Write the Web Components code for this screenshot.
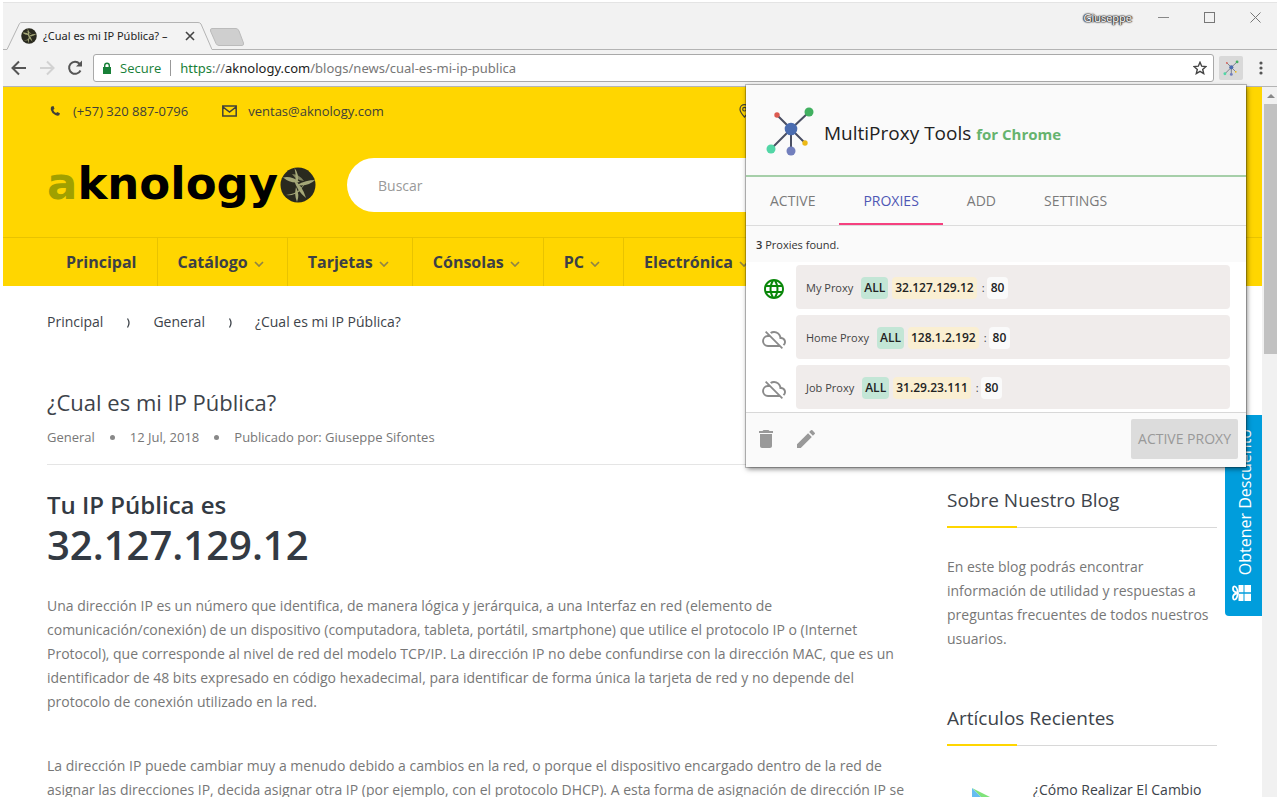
<!DOCTYPE html>
<html lang="es">
<head>
<meta charset="utf-8">
<title>¿Cual es mi IP Pública? – aknology</title>
<style>
html, body { margin: 0; height: 100%; background: #fff; }
body { font-family: "Open Sans", "Noto Sans", sans-serif; font-size: 14px; color: #777; overflow: hidden; }
</style>
</head>
<body>
<browser-window>
  <tab-strip slot="chrome" user="Giuseppe">¿Cual es mi IP Pública? –</tab-strip>
  <tool-bar slot="chrome"></tool-bar>
  <shop-header></shop-header>
  <blog-page></blog-page>
  <discount-tab slot="overlay">Obtener Descuento</discount-tab>
  <proxy-popup slot="popup">
    <proxy-row state="on" protocol="ALL" host="32.127.129.12" port="80">My Proxy</proxy-row>
    <proxy-row protocol="ALL" host="128.1.2.192" port="80">Home Proxy</proxy-row>
    <proxy-row protocol="ALL" host="31.29.23.111" port="80">Job Proxy</proxy-row>
  </proxy-popup>
</browser-window>

<script>
const RESET = `
  :host, *, *::before, *::after { box-sizing: border-box; }
  button { border: 0; padding: 0; margin: 0; background: none; font: inherit; color: inherit; display: grid; place-items: center; cursor: pointer; }
  a { color: inherit; text-decoration: none; }
  svg { display: block; }
  h1, h2, h3, p, ul, ol { margin: 0; padding: 0; font-weight: 400; list-style: none; }
`;

function define(name, render) {
  customElements.define(name, class extends HTMLElement {
    constructor() {
      super();
      this.attachShadow({ mode: 'open' });
    }
    connectedCallback() {
      const t = document.createElement('template');
      const { css, html } = render(this);
      t.innerHTML = `<style>${RESET}${css}</style>${html}`;
      this.shadowRoot.replaceChildren(t.content.cloneNode(true));
    }
  });
}

const NODES = `
  <path d="M11 9 25 23 43 6M25 23 5 43M25 23V45M25 23 39 37" fill="none" stroke="#4a4f63" stroke-width="2"/>
  <circle cx="11" cy="9" r="2.7" fill="#dc5a50"/><circle cx="43" cy="6" r="4.5" fill="#41b060"/>
  <circle cx="25" cy="23" r="6.3" fill="#4a6cb0"/><circle cx="5" cy="43" r="4.5" fill="#52d6a6"/>
  <circle cx="25" cy="45" r="4.5" fill="#727fbd"/><circle cx="39" cy="37" r="2.7" fill="#edb916"/>`;

const GLOBE = `
  <circle cx="18" cy="18" r="17.5" fill="#2a2a1f"/>
  <g fill="#a5a878">
    <path d="M14.500 1q5 6 3 15-1.500-1-2-4 .5-5-1-11Z"/><path d="M3 10.500q8-2 17 4.500-9 2-17-4.500Z"/>
    <path d="M14 13q8 5 12 18-9-7-12-18Z"/><path d="M35 13q-9 0-18 5 11 2 18-5Z"/>
    <path d="M30 13q-6 4-10 11-6 5-14 4 9-1 13-5 5-6 11-10Z"/>
    <path d="M16 20q-2 8 1 15 3-7-1-15Z"/><path d="M12 7q7 0 12 7-8-1-12-7Z" opacity=".7"/>
  </g>`;

define('browser-window', () => ({
  css: `
    :host { display: block; height: 100vh; padding: 2px 3px 3px; }
    .frame { height: 100%; display: flex; flex-direction: column; position: relative; background: #f2f2f2; border-top: 1px solid #e4e4e4; }
    .view { flex: 1; min-height: 0; display: flex; background: #fff; }
    .page { flex: 1; min-width: 0; overflow: hidden; position: relative; }
    .bar { width: 15px; background: #f1f1f1; padding-left: 2px; display: flex; flex-direction: column; }
    .up { height: 17px; display: grid; place-items: center; }
    .thumb { height: 250px; background: #c1c1c1; }
    .popup { position: absolute; top: 82px; right: 31px; width: 500px; }
  `,
  html: `<div class="frame"><slot name="chrome"></slot>
    <div class="view">
      <div class="page"><slot></slot><slot name="overlay"></slot></div>
      <div class="bar"><div class="up"><svg width="8" height="4"><path d="M0 4 4 0 8 4Z" fill="#888"/></svg></div><div class="thumb"></div></div>
    </div>
    <div class="popup"><slot name="popup"></slot></div></div>`
}));

define('tab-strip', el => ({
  css: `
    :host { display: flex; height: 47px; font-size: 12px; color: #222; align-items: flex-end; }
    .lead { width: 4px; border-bottom: 1px solid #b4b4b4; }
    .tab { position: relative; width: 205px; height: 28px; display: flex; align-items: center; padding: 0 14px; gap: 6px; }
    .shape { position: absolute; inset: 0; }
    .tab > * { position: relative; }
    .tab > .shape { position: absolute; }
    .label { flex: 1; white-space: nowrap; overflow: hidden; font-family: "Noto Sans", sans-serif; font-size: 11px; line-height: 18px; }
    .rest { flex: 1; align-self: stretch; display: flex; justify-content: space-between; border-bottom: 1px solid #b4b4b4; }
    .new { align-self: flex-end; margin: 0 0 3px -3px; }
    .sys { display: flex; align-items: center; height: 28px; padding-right: 16px; gap: 35px; color: #777; }
    .user { color: #fff; font-size: 11px; text-shadow: 0 0 1px #333, 0 0 2px #333, 0 0 2px #333, 1px 0 1px #555, -1px 0 1px #555; margin-right: -9px; }
  `,
  html: `<div class="lead"></div>
    <div class="tab">
      <svg class="shape" width="205" height="28"><path d="M0 27.500 12.500 1.500Q13 .5 15 .5H191Q193 .5 194 2L205 27.500" fill="#f3f3f3" stroke="#b4b4b4"/></svg>
      <svg width="16" height="16" viewBox="0 0 36 36">${GLOBE}</svg>
      <span class="label"><slot></slot></span>
      <button aria-label="Cerrar pestaña"><svg width="16" height="10"><path d="m4 1 8 8m0-8L4 9" stroke="#444" stroke-width="1.600"/></svg></button>
    </div>
    <div class="rest">
      <button class="new" aria-label="Nueva pestaña"><svg width="36" height="18"><path d="M3 .5H27Q29 .5 30 3L34.500 15Q35 17.500 33 17.500H10Q8 17.500 7 15.500L1.500 3Q1 .5 3 .5Z" fill="#cfcfcf" stroke="#bbb"/></svg></button>
      <div class="sys"><span class="user">${el.getAttribute('user')}</span>
        <button aria-label="Minimizar"><svg width="11" height="11"><path d="M0 5.500H11" stroke="#888"/></svg></button>
        <button aria-label="Maximizar"><svg width="11" height="11"><rect x=".5" y=".5" width="10" height="10" fill="none" stroke="#777"/></svg></button>
        <button aria-label="Cerrar"><svg width="11" height="11"><path d="m.5.5 10 10m0-10L.5 10.500" stroke="#777"/></svg></button>
      </div>
    </div>`
}));

define('tool-bar', () => ({
  css: `
    :host { display: flex; align-items: center; height: 37px; border-bottom: 1px solid #b4b4b4; padding: 0 14px 0 8px; font-size: 13px; color: #222; }
    .nav { display: flex; gap: 12px; margin-right: 10px; }
    .omni { flex: 1; height: 28px; display: flex; align-items: center; background: #fff; border: 1px solid #a9a9a9; border-radius: 3px; padding: 0 6px 0 8px; }
    .secure { color: #188038; margin-left: 8px; padding-right: 9px; border-right: 1px solid #999; line-height: 16px; }
    .url { flex: 1; margin-left: 9px; outline: 0; color: #777; white-space: nowrap; font-family: "Noto Sans", sans-serif; }
    .s { color: #188038; } .h { color: #222; }
    .ext { width: 24px; height: 24px; background: #d9d9d9; border-radius: 2px; margin: 0 16px 0 5px; }
  `,
  html: `<div class="nav">
      <button aria-label="Atrás"><svg width="16" height="16" fill="none" stroke="#555" stroke-width="2"><path d="M15 8H2M8 1.500 1.500 8 8 14.500"/></svg></button>
      <button aria-label="Adelante"><svg width="16" height="16" fill="none" stroke="#d2d2d2" stroke-width="2"><path d="M1 8H14M8 1.500 14.500 8 8 14.500"/></svg></button>
      <button aria-label="Recargar"><svg width="16" height="16" fill="none" stroke="#555" stroke-width="2"><path d="M13.500 10.500A6 6 0 1 1 12.500 3.700L14 5"/><path d="M15 .5V6.500H9Z" fill="#555" stroke="none"/></svg></button>
    </div>
    <div class="omni">
      <svg width="10" height="13"><path d="M1 5H9V12H1Z" fill="#188038"/><path d="M2.700 6V3.500a2.300 2.300 0 0 1 4.600 0V6" fill="none" stroke="#188038" stroke-width="1.400"/></svg>
      <span class="secure">Secure</span>
      <div class="url" role="textbox" aria-label="Dirección" contenteditable="true" spellcheck="false"><span class="s">https</span>://<span class="h">aknology.com</span>/blogs/news/cual-es-mi-ip-publica</div>
      <button aria-label="Favorito"><svg width="14" height="14" viewBox="0 0 14 14"><path d="m7 1.300 1.700 3.900 4.200.4-3.200 2.800 1 4.200L7 10.400l-3.700 2.200 1-4.200L1.100 5.600l4.200-.4Z" fill="none" stroke="#444" stroke-width="1.400"/></svg></button>
    </div>
    <button class="ext" aria-label="MultiProxy Tools"><svg width="16" height="16" viewBox="0 0 48 50">${NODES}</svg></button>
    <button aria-label="Menú"><svg width="4" height="14" fill="#555"><circle cx="2" cy="2" r="1.600"/><circle cx="2" cy="7" r="1.600"/><circle cx="2" cy="12" r="1.600"/></svg></button>`
}));

const CHEV = `<svg width="10" height="6" fill="none" stroke="#8f8445" stroke-width="1.700"><path d="m1 1 4 4 4-4"/></svg>`;
const CRUMB = `<svg width="6" height="10" fill="none" stroke="#3d434a" stroke-width="1.300"><path d="M2.500.5q3 4.500 0 9"/></svg>`;

define('shop-header', () => ({
  css: `
    :host { display: block; background: #ffd600; color: #40403a; }
    .top, .brand { padding: 0 45px 0 44px; display: flex; align-items: center; }
    .top { height: 48px; font-size: 13px; gap: 34px; }
    .top a { display: flex; align-items: center; gap: 11px; }
    .top .place { flex: 0 0 478px; margin-left: auto; }
    .brand { height: 102px; padding-bottom: 2px; gap: 31px; }
    .logo { display: flex; align-items: center; width: 269px; gap: 2px; color: #000; font: 700 45px/50px "DejaVu Sans", sans-serif; }
    .logo span { flex: 1; height: 52px; }
    .logo i { font-style: normal; color: #a0a000; }
    .search { flex: 1; }
    input { display: block; width: 100%; height: 54px; border: 0; border-radius: 27px; padding: 0 31px; background: #fff; font: 14px "Open Sans", sans-serif; color: #333; }
    input::placeholder { color: #999; opacity: 1; }
    nav { border-top: 1px solid #e8c300; padding: 0 43px; display: flex; height: 49px; font-size: 16px; font-weight: 700; }
    nav a { display: flex; align-items: center; gap: 6px; padding: 0 20px; border-right: 1px solid #e8c300; color: #3c3f46; }
    nav svg { margin-right: 3px; margin-top: 3px; }
  `,
  html: `<div class="top">
      <a href="#"><svg width="15" height="14" viewBox="0 0 15 14"><path d="M4.500 2.500 6.500 2l1 2.700-1.300 1.200q1 2.200 2.900 3.200l1.200-1.100 2.600 1.200-.6 2.100q-1.600 1-4-.3Q4.600 9.200 3.800 5.800 3.500 3.500 4.500 2.500Z" fill="#40403a"/></svg>(+57) 320 887-0796</a>
      <a href="#"><svg width="15" height="12" fill="none" stroke="#40403a" stroke-width="1.500"><path d="M.8 1H14.200V11H.8ZM1 2l6.500 5L14 2"/></svg>ventas@aknology.com</a>
      <a class="place" href="#" aria-label="Ubicación"><svg width="11" height="14" fill="none" stroke="#40403a" stroke-width="1.200"><path d="M5.500 13Q1 8 1 5.200a4.500 4.500 0 0 1 9 0Q10 8 5.500 13Z"/><circle cx="5.500" cy="5.200" r="1.800"/></svg></a>
    </div>
    <div class="brand">
      <a class="logo" href="#"><span><i>a</i>knology</span><svg width="36" height="36">${GLOBE}</svg></a>
      <div class="search"><input type="search" placeholder="Buscar" aria-label="Buscar"></div>
    </div>
    <nav><a href="#">Principal</a><a href="#">Catálogo ${CHEV}</a><a href="#">Tarjetas ${CHEV}</a><a href="#">Cónsolas ${CHEV}</a><a href="#">PC ${CHEV}</a><a href="#">Electrónica ${CHEV}</a></nav>`
}));

define('blog-page', () => ({
  css: `
    :host { display: block; padding: 0 45px 0 44px; line-height: 24px; }
    .crumbs { display: flex; gap: 22px; padding-top: 24px; color: #3d434a; }
    .crumbs svg { margin-top: 8px; }
    .cols { display: grid; grid-template-columns: minmax(0, 1fr) 270px; gap: 40px; }
    .head { padding-top: 53px; border-bottom: 1px solid #e5e5e5; padding-bottom: 17px; margin-bottom: 24px; }
    h1 { font-size: 22px; line-height: 30px; color: #3d434a; }
    .meta { display: flex; font-size: 13px; line-height: 20px; margin-top: 10px; gap: 15px; align-items: center; }
    .meta i { width: 5px; height: 5px; border-radius: 50%; background: #888; }
    h2 { font-size: 24px; line-height: 32px; color: #333a43; font-weight: 600; }
    .ip { font-size: 40px; line-height: 48px; color: #333a43; font-weight: 600; margin-bottom: 25px; }
    article p + p { margin-top: 40px; }
    aside { padding-top: 152px; }
    h3 { font-size: 19px; line-height: 28px; color: #3d434a; padding-bottom: 13px; border-bottom: 1px solid #d8d8d8; margin-bottom: 27px; position: relative; }
    h3::after { content: ""; position: absolute; left: 0; bottom: -1px; width: 70px; height: 2px; background: #ffd600; }
    aside p { margin-bottom: 53px; }
    .post { display: flex; gap: 16px; color: #3d434a; padding-top: 5px; }
    .thumb { width: 70px; padding: 10px 0 0 25px; }
  `,
  html: `<nav class="crumbs" aria-label="Ruta"><a href="#">Principal</a>${CRUMB}<a href="#">General</a>${CRUMB}<span>¿Cual es mi IP Pública?</span></nav>
    <div class="cols">
      <article>
        <div class="head"><h1>¿Cual es mi IP Pública?</h1>
          <div class="meta"><a href="#">General</a><i></i><span>12 Jul, 2018</span><i></i><span>Publicado por: Giuseppe Sifontes</span></div></div>
        <h2>Tu IP Pública es</h2>
        <div class="ip">32.127.129.12</div>
        <p>Una dirección IP es un número que identifica, de manera lógica y jerárquica, a una Interfaz en red (elemento de comunicación/conexión) de un dispositivo (computadora, tableta, portátil, smartphone) que utilice el protocolo IP o (Internet Protocol), que corresponde al nivel de red del modelo TCP/IP. La dirección IP no debe confundirse con la dirección MAC, que es un identificador de 48 bits expresado en código hexadecimal, para identificar de forma única la tarjeta de red y no depende del protocolo de conexión utilizado en la red.</p>
        <p>La dirección IP puede cambiar muy a menudo debido a cambios en la red, o porque el dispositivo encargado dentro de la red de asignar las direcciones IP, decida asignar otra IP (por ejemplo, con el protocolo DHCP). A esta forma de asignación de dirección IP se</p>
      </article>
      <aside>
        <h3>Sobre Nuestro Blog</h3>
        <p>En este blog podrás encontrar información de utilidad y respuestas a preguntas frecuentes de todos nuestros usuarios.</p>
        <h3>Artículos Recientes</h3>
        <a class="post" href="#"><span class="thumb"><svg width="36" height="36"><path d="M0 0 36 18 18 18Z" fill="#7fe37a"/><path d="M0 0V34L18 18Z" fill="#66bdf0"/></svg></span><span>¿Cómo Realizar El Cambio</span></a>
      </aside>
    </div>`
}));

define('discount-tab', () => ({
  css: `
    :host { position: absolute; right: 0; top: 328px; display: block; }
    button { display: flex; flex-direction: column; align-items: center; justify-content: flex-end; gap: 9px; width: 37px; height: 201px; padding: 0 0 14px; background: #009ddc; color: #fff; border-radius: 4px 0 0 4px; font-size: 16px; }
    span { writing-mode: vertical-rl; transform: rotate(180deg); line-height: 24px; margin-left: 3px; white-space: nowrap; }
    svg { margin-right: 4px; }
  `,
  html: `<button><span><slot></slot></span><svg width="19" height="18"><path d="M6.500 1H11.500V8.300H6.500ZM12.500 1H19V8.300H12.500ZM6.500 9.700H11.500V17H6.500ZM12.500 9.700H19V17H12.500Z" fill="#fff"/><path d="M6 9Q1 8 1 5T3 2.500 6 9Q1 10 1 13T3 15.500 6 9" fill="none" stroke="#fff" stroke-width="1.800"/></svg></button>`
}));

define('proxy-popup', () => ({
  css: `
    :host { display: block; background: #fafafa; color: #333; box-shadow: 0 0 0 1px rgba(0,0,0,.22), 1px 2px 5px rgba(0,0,0,.5); }
    header { height: 92px; display: flex; align-items: center; gap: 8px; padding: 1px 20px 0 20px; border-bottom: 2px solid #a6cfa9; }
    h2 { font-size: 19px; line-height: 28px; color: #222; padding-top: 6px; }
    h2 b { font-size: 15px; color: #66b36e; font-weight: 700; }
    .tabs { display: flex; height: 49px; border-bottom: 1px solid #dcdcdc; font-size: 14px; font-weight: 500; color: #7a7a7a; }
    .tabs button { padding: 0 24px 2px; }
    .tabs [aria-selected=true] { color: #4e57b5; box-shadow: inset 0 -2px #f5407f; }
    .count { height: 36px; line-height: 38px; font-size: 11px; padding-left: 10px; }
    .count b { font-weight: 600; }
    .list { display: grid; gap: 6px; padding: 3px 16px 3px 10px; background: #fff; }
    footer { height: 55px; border-top: 1px solid #d8d8d8; padding: 0 8px 2px 8px; display: flex; align-items: center; gap: 16px; }
    footer .go { margin-left: auto; width: 107px; height: 40px; padding-bottom: 2px; background: #dcdcdc; color: #999; border-radius: 2px; font-size: 14px; font-weight: 500; white-space: nowrap; }
  `,
  html: `<header><svg width="50" height="50">${NODES}</svg><h2>MultiProxy Tools <b>for Chrome</b></h2></header>
    <div class="tabs" role="tablist"><button role="tab">ACTIVE</button><button role="tab" aria-selected="true">PROXIES</button><button role="tab">ADD</button><button role="tab">SETTINGS</button></div>
    <div class="count"><b>3</b> Proxies found.</div>
    <div class="list"><slot></slot></div>
    <footer>
      <button aria-label="Delete"><svg width="24" height="24" fill="#999"><path d="M6 19c0 1.100.9 2 2 2h8c1.100 0 2-.9 2-2V7H6v12zM19 4h-3.500l-1-1h-5l-1 1H5v2h14V4z"/></svg></button>
      <button aria-label="Edit"><svg width="24" height="24" fill="#999"><path d="M3 17.250V21h3.750L17.810 9.940l-3.750-3.750L3 17.250zM20.710 7.040a1 1 0 0 0 0-1.410l-2.340-2.340a1 1 0 0 0-1.410 0l-1.830 1.830 3.750 3.750 1.830-1.830z"/></svg></button>
      <button class="go" disabled>ACTIVE PROXY</button>
    </footer>`
}));

define('proxy-row', el => ({
  css: `
    :host { display: grid; grid-template-columns: 40px 1fr; align-items: center; font-size: 11px; color: #444; }
    .icon { padding: 4px 0 0 6px; }
    .card { height: 44px; background: #f0eceb; border-radius: 4px; display: flex; align-items: center; padding: 1px 0 0 10px; line-height: 22px; }
    b { font-weight: 600; color: #222; font-size: 12px; border-radius: 4px; }
    .p { background: #c3e6d6; padding: 0 3px; margin: 0 4px 0 8px; }
    .h { background: #faefd2; padding: 0 3px; margin-right: 5px; }
    .n { background: #fafafa; padding: 0 4px; margin-left: 2px; }
  `,
  html: `<span class="icon">${el.getAttribute('state') === 'on'
    ? `<svg width="24" height="24" fill="#0a870a"><path d="M11.990 2C6.470 2 2 6.480 2 12s4.470 10 9.990 10C17.520 22 22 17.520 22 12S17.520 2 11.990 2zm6.930 6h-2.950a15.650 15.650 0 0 0-1.380-3.560A8.030 8.030 0 0 1 18.920 8zM12 4.040c.83 1.200 1.480 2.530 1.910 3.960h-3.820c.43-1.430 1.080-2.760 1.910-3.960zM4.260 14C4.100 13.360 4 12.690 4 12s.1-1.360.26-2h3.380a16.500 16.500 0 0 0 0 4H4.260zm.82 2h2.950c.32 1.250.78 2.450 1.380 3.560A7.990 7.990 0 0 1 5.080 16zm2.950-8H5.080a7.990 7.990 0 0 1 4.330-3.560A15.650 15.650 0 0 0 8.030 8zM12 19.960A14.100 14.100 0 0 1 10.090 16h3.820A14.100 14.100 0 0 1 12 19.960zM14.340 14H9.660a14.700 14.700 0 0 1 0-4h4.680a14.700 14.700 0 0 1 0 4zm.25 5.560c.6-1.110 1.060-2.310 1.380-3.560h2.950a8.030 8.030 0 0 1-4.330 3.560zM16.360 14a16.500 16.500 0 0 0 0-4h3.380c.16.640.26 1.310.26 2s-.1 1.360-.26 2h-3.380z"/></svg>`
    : `<svg width="24" height="24" fill="#8a8a8a"><path d="M19.350 10.040A7.490 7.490 0 0 0 12 4c-1.480 0-2.850.43-4.010 1.170l1.460 1.460A5.497 5.497 0 0 1 17.500 11.500v.5H19a3 3 0 0 1 1.790 5.400l1.410 1.410A4.980 4.980 0 0 0 24 15c0-2.640-2.050-4.780-4.650-4.960zM3 5.270l2.750 2.740A6 6 0 0 0 6 20h11.730l2 2L21 20.730 4.270 4 3 5.270zM7.730 10l8 8H6a4 4 0 0 1 0-8h1.730z"/></svg>`}</span>
    <div class="card"><span><slot></slot></span><b class="p">${el.getAttribute('protocol')}</b><b class="h">${el.getAttribute('host')}</b>:<b class="n">${el.getAttribute('port')}</b></div>`
}));
</script>
</body>
</html>
